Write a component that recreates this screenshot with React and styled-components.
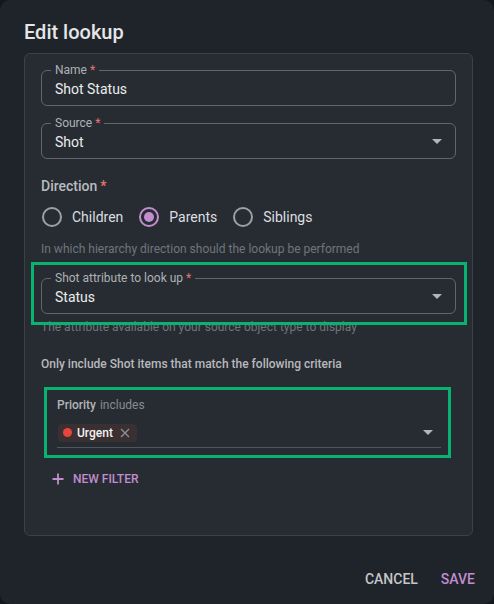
import React from 'react'
import styled, { createGlobalStyle } from 'styled-components'

const GlobalStyle = createGlobalStyle`
  html, body {
    margin: 0;
    padding: 0;
    background: #14171c;
  }
  body {
    font-family: Roboto, "Noto Sans", "Liberation Sans", sans-serif;
    -webkit-font-smoothing: antialiased;
  }
`

const Caret = () => (
  <svg width="10" height="5" viewBox="0 0 10 5">
    <path d="M0 0 L10 0 L5 5 Z" fill="#b3b5b8" />
  </svg>
)

function App() {
  return (
    <>
      <GlobalStyle />
      <Dialog>
        <Title>Edit lookup</Title>
        <Panel>
          <Outlined>
            <FloatLabel>Name<Req>*</Req></FloatLabel>
            <Value>Shot Status</Value>
          </Outlined>

          <Outlined $gap>
            <FloatLabel>Source<Req>*</Req></FloatLabel>
            <Value>Shot</Value>
            <Caret />
          </Outlined>

          <GroupLabel>Direction<Req>*</Req></GroupLabel>
          <RadioRow>
            <RadioOption>
              <RadioCircle />
              Children
            </RadioOption>
            <RadioOption>
              <RadioCircle $checked />
              Parents
            </RadioOption>
            <RadioOption>
              <RadioCircle />
              Siblings
            </RadioOption>
          </RadioRow>
          <Helper>In which hierarchy direction should the lookup be performed</Helper>

          <Highlight $top={-16} $right={-11} $bottom={-11} $left={-10} $mt={19}>
            <Outlined>
              <FloatLabel>Shot attribute to look up<Req>*</Req></FloatLabel>
              <Value>Status</Value>
              <Caret />
            </Outlined>
          </Highlight>
          <Helper $mt={3}>The attribute available on your source object type to display</Helper>

          <Criteria>Only include Shot items that match the following criteria</Criteria>

          <FilterBlock>
            <Highlight $top={-8} $right={-10} $bottom={-10} $left={-13}>
              <FilterLabel>
                Priority <span>includes</span>
              </FilterLabel>
              <FilterInput>
                <Chip>
                  <Dot />
                  Urgent
                  <ChipClose>
                    <svg width="10" height="10" viewBox="0 0 10 10">
                      <path d="M1 1 L9 9 M9 1 L1 9" stroke="#8d8f93" strokeWidth="1.4" />
                    </svg>
                  </ChipClose>
                </Chip>
                <Caret />
              </FilterInput>
            </Highlight>
          </FilterBlock>

          <NewFilter>
            <svg width="12" height="12" viewBox="0 0 12 12">
              <path d="M6 0.5 V11.5 M0.5 6 H11.5" stroke="#c18dcf" strokeWidth="1.8" />
            </svg>
            New filter
          </NewFilter>
        </Panel>

        <Footer>
          <TextButton>Cancel</TextButton>
          <TextButton $primary>Save</TextButton>
        </Footer>
      </Dialog>
    </>
  )
}

export default App

const Dialog = styled.div`
  box-sizing: border-box;
  width: 494px;
  height: 604px;
  background: #1f232a;
  border-radius: 10px;
  padding: 16px 21px 0 24px;
  display: flex;
  flex-direction: column;
`

const Title = styled.h2`
  margin: 0;
  font-size: 20px;
  font-weight: 500;
  line-height: 32px;
  color: #e4e6e8;
`

const Panel = styled.div`
  box-sizing: border-box;
  margin-top: 5px;
  height: 483px;
  background: #272c33;
  border: 1px solid #3c4147;
  border-radius: 6px;
  padding: 16px;
  display: flex;
  flex-direction: column;
`

const Outlined = styled.div`
  position: relative;
  box-sizing: border-box;
  height: 36px;
  border: 1px solid #62666b;
  border-radius: 6px;
  padding: 0 13px 0 13px;
  margin-top: ${p => (p.$gap ? '17px' : '0')};
  display: flex;
  align-items: center;
  justify-content: space-between;
`

const FloatLabel = styled.span`
  position: absolute;
  top: -8px;
  left: 9px;
  padding: 0 4px;
  background: #272c33;
  font-size: 12px;
  line-height: 14px;
  color: #aeb1b5;
`

const Req = styled.span`
  color: #e57373;
  margin-left: 3px;
`

const Value = styled.span`
  font-size: 14px;
  color: #eceded;
  padding-top: 2px;
`

const GroupLabel = styled.div`
  margin-top: 17px;
  font-size: 14px;
  font-weight: 500;
  line-height: 20px;
  color: #b9bbbe;
`

const RadioRow = styled.div`
  height: 42px;
  display: flex;
  align-items: center;
  gap: 16px;
  padding-left: 1px;
`

const RadioOption = styled.label`
  display: flex;
  align-items: center;
  gap: 10px;
  font-size: 14px;
  color: #dcdee0;
`

const RadioCircle = styled.span`
  box-sizing: border-box;
  width: 20px;
  height: 20px;
  border-radius: 50%;
  border: 2px solid ${p => (p.$checked ? '#c18dcf' : '#9ea0a3')};
  display: flex;
  align-items: center;
  justify-content: center;

  &::after {
    content: '';
    display: ${p => (p.$checked ? 'block' : 'none')};
    width: 10px;
    height: 10px;
    border-radius: 50%;
    background: #c18dcf;
  }
`

const Helper = styled.div`
  margin-top: ${p => (p.$mt ?? 1)}px;
  font-size: 12px;
  line-height: 20px;
  color: #6f757b;
`

const Highlight = styled.div`
  position: relative;
  margin-top: ${p => p.$mt ?? 0}px;

  &::after {
    content: '';
    position: absolute;
    top: ${p => p.$top}px;
    right: ${p => p.$right}px;
    bottom: ${p => p.$bottom}px;
    left: ${p => p.$left}px;
    border: 3px solid #08b372;
    pointer-events: none;
  }
`

const Criteria = styled.div`
  margin-top: 17px;
  font-size: 12px;
  font-weight: 500;
  line-height: 20px;
  color: #b7b9bc;
`

const FilterBlock = styled.div`
  margin: 21px 15px 0 16px;
`

const FilterLabel = styled.div`
  font-size: 12px;
  font-weight: 500;
  line-height: 20px;
  color: #b3b5b8;

  span {
    font-weight: 400;
    color: #878b90;
    margin-left: 1px;
  }
`

const FilterInput = styled.div`
  margin-top: 3px;
  height: 29px;
  border-bottom: 1px solid #53575c;
  display: flex;
  align-items: center;
  justify-content: space-between;
  padding: 0 8px 0 1px;
`

const Chip = styled.span`
  display: inline-flex;
  align-items: center;
  height: 18px;
  padding: 0 7px 0 5px;
  border-radius: 4px;
  background: #3a2f31;
  font-size: 12px;
  font-weight: 500;
  color: #f2f2f2;
  gap: 5px;
`

const Dot = styled.span`
  width: 9px;
  height: 9px;
  border-radius: 50%;
  background: #e8453c;
`

const ChipClose = styled.span`
  display: flex;
  margin-left: 2px;
`

const NewFilter = styled.button`
  margin-top: 16px;
  align-self: flex-start;
  height: 30px;
  padding: 0 0 0 11px;
  border: none;
  background: none;
  display: flex;
  align-items: center;
  gap: 9px;
  font-family: inherit;
  font-size: 12px;
  font-weight: 500;
  text-transform: uppercase;
  color: #c18dcf;
`

const Footer = styled.div`
  margin-top: 25px;
  margin-right: -10px;
  display: flex;
  justify-content: flex-end;
  gap: 7px;
`

const TextButton = styled.button`
  height: 36px;
  padding: 0 8px;
  border: none;
  background: none;
  font-family: inherit;
  font-size: 14px;
  font-weight: 500;
  text-transform: uppercase;
  color: ${p => (p.$primary ? '#c18dcf' : '#c4c6c9')};
`
